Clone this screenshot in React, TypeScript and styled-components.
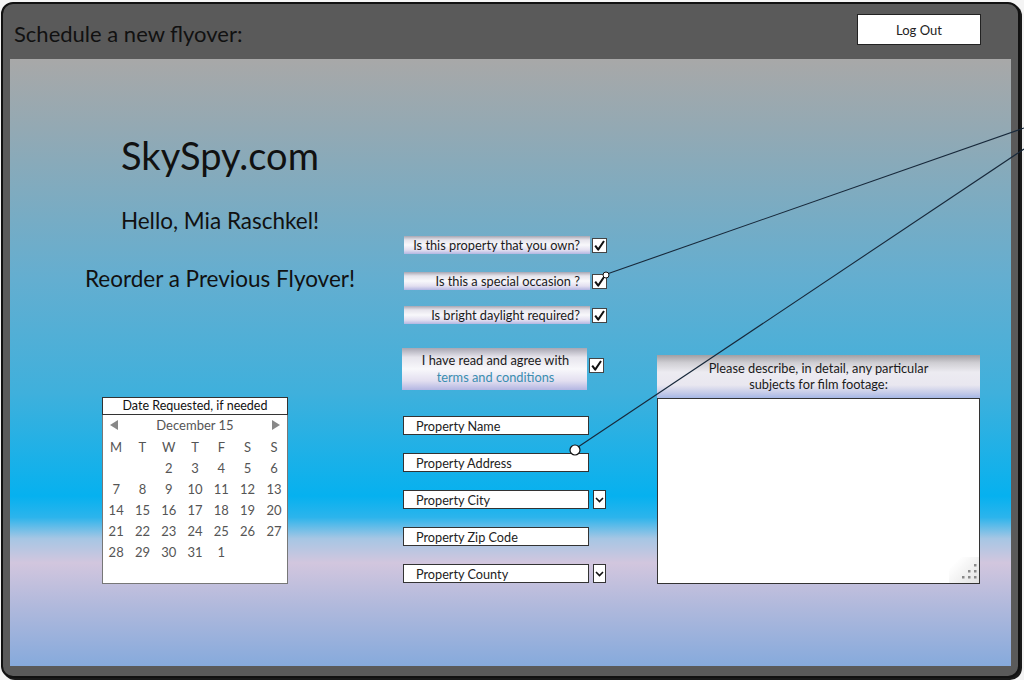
import React from 'react';
import styled, { createGlobalStyle } from 'styled-components';

const GlobalStyle = createGlobalStyle`
  html, body {
    margin: 0;
    padding: 0;
    background: #f4f4f4;
  }
  body {
    font-family: Lato, "Open Sans", sans-serif;
    color: #1a1a1a;
  }
`;

/** page root, holds the frame and the annotation overlay */
const Page = styled.div`
  position: relative;
  width: 1024px;
  height: 680px;
  overflow: hidden;
`;

const Frame = styled.div`
  box-sizing: border-box;
  width: 1019px;
  height: 676px;
  margin: 2px 0 0 1px;
  padding: 0 7px 10px 7px;
  background: #5a5a5a;
  border: 2px solid #111;
  border-radius: 12px;
  box-shadow: 2px 2px 0 #1a1a1a;
  display: flex;
  flex-direction: column;
`;

const TitleBar = styled.div`
  height: 55px;
  display: flex;
  justify-content: space-between;
  align-items: flex-start;
`;

const Title = styled.h1`
  margin: 16px 0 0 4px;
  font-size: 22px;
  line-height: 28px;
  font-weight: 400;
  color: #111;
`;

const LogOut = styled.button`
  box-sizing: border-box;
  width: 124px;
  height: 31px;
  margin: 10px 30px 0 0;
  background: #fff;
  border: 1px solid #222;
  font-family: inherit;
  font-size: 13px;
  color: #222;
`;

const Panel = styled.div`
  flex: 1;
  display: grid;
  grid-template-columns: 392px 255px 323px;
  background: linear-gradient(
    180deg,
    #a8a8a8 0%,
    #92a9b4 12%,
    #64aed0 36%,
    #3fb0dc 55%,
    #06b1ef 72%,
    #2cb4ec 75.5%,
    #a6c6e4 79%,
    #d2c6de 83%,
    #b1b9dc 90%,
    #86aadc 100%
  );
`;

const LeftColumn = styled.div`
  display: flex;
  flex-direction: column;
  align-items: center;
  padding-left: 28px;
`;

const Brand = styled.div`
  margin-top: 73px;
  font-size: 38px;
  line-height: 46px;
  color: #111;
`;

const Greeting = styled.div<{ $gap: number }>`
  margin-top: ${p => p.$gap}px;
  font-size: 22.5px;
  line-height: 28px;
  color: #111;
  white-space: nowrap;
`;

/* ---------- calendar ---------- */

const Calendar = styled.div`
  box-sizing: border-box;
  align-self: flex-start;
  margin: 104px 0 0 64px;
  width: 186px;
  height: 187px;
  background: #fff;
  border: 1px solid #777;
`;

const CalendarHeader = styled.div`
  height: 16px;
  margin: -1px -1px 0;
  border: 1px solid #333;
  font-size: 12.5px;
  line-height: 16px;
  text-align: center;
  color: #111;
`;

const MonthNav = styled.div`
  display: flex;
  align-items: center;
  justify-content: space-between;
  height: 20px;
  padding: 0 7px;
  font-size: 13px;
  color: #555;
`;

const Arrow = styled.span<{ $dir: 'left' | 'right' }>`
  width: 0;
  height: 0;
  border-top: 5px solid transparent;
  border-bottom: 5px solid transparent;
  ${p => (p.$dir === 'left' ? 'border-right: 8px solid #888;' : 'border-left: 8px solid #888;')}
`;

const DayGrid = styled.div`
  display: grid;
  grid-template-columns: repeat(7, 26.3px);
  grid-auto-rows: 21px;
  margin-top: 2px;
`;

const DayCell = styled.span`
  text-align: center;
  font-size: 13px;
  line-height: 21px;
  color: #555;
`;

/* ---------- middle column ---------- */

const MiddleColumn = styled.div`
  display: flex;
  flex-direction: column;
  align-items: flex-start;
`;

const QuestionRow = styled.div<{ $gap: number; $inset: number }>`
  display: flex;
  align-items: center;
  gap: 2px;
  margin: ${p => p.$gap}px 0 0 ${p => p.$inset}px;
`;

const QuestionLabel = styled.div<{ $tall?: boolean }>`
  box-sizing: border-box;
  width: ${p => (p.$tall ? 185 : 186)}px;
  height: ${p => (p.$tall ? 42 : 18)}px;
  padding: ${p => (p.$tall ? '4px 8px 0 10px' : '0 10px 0 4px')};
  background: linear-gradient(
    180deg,
    #a7a6b2 0%,
    #e6e4ec 22%,
    #f8f8fb 50%,
    #e3dff0 78%,
    #b3b6e2 100%
  );
  font-size: 12.8px;
  line-height: ${p => (p.$tall ? '17px' : '18px')};
  color: #1a1a1a;
  text-align: ${p => (p.$tall ? 'center' : 'right')};
  white-space: nowrap;
`;

const TermsLink = styled.span`
  display: block;
  color: #3a8db0;
`;

const CheckBox = styled.span<{ $drop?: number }>`
  box-sizing: border-box;
  width: 15px;
  height: 15px;
  margin-top: ${p => p.$drop ?? 0}px;
  align-self: ${p => (p.$drop ? 'flex-start' : 'center')};
  background: #fff;
  border: 1px solid #444;
  display: flex;
  align-items: center;
  justify-content: center;
`;

const Field = styled.div<{ $gap: number }>`
  display: flex;
  align-items: center;
  gap: 4px;
  margin: ${p => p.$gap}px 0 0 1px;
`;

const FieldBox = styled.div`
  box-sizing: border-box;
  width: 186px;
  height: 19px;
  padding-left: 12px;
  background: #fff;
  border: 1px solid #333;
  font-size: 12.7px;
  line-height: 18px;
  color: #222;
`;

const DropButton = styled.span`
  box-sizing: border-box;
  width: 13px;
  height: 19px;
  background: #fff;
  border: 1px solid #333;
  display: flex;
  align-items: center;
  justify-content: center;
`;

/* ---------- right column ---------- */

const RightColumn = styled.div`
  display: flex;
  flex-direction: column;
  padding-top: 296px;
`;

const NotesHeader = styled.div`
  height: 43px;
  padding-top: 5px;
  box-sizing: border-box;
  background: linear-gradient(
    180deg,
    #a09fa4 0%,
    #cfced3 18%,
    #ecebf1 40%,
    #e9e7f0 70%,
    #c5cbe8 88%,
    #a6b8e6 100%
  );
  font-size: 12.8px;
  line-height: 16px;
  text-align: center;
  color: #1a1a1a;
`;

const NotesBox = styled.div`
  position: relative;
  box-sizing: border-box;
  height: 186px;
  background: #fff;
  border: 1px solid #333;
`;

const Grip = styled.div`
  position: absolute;
  right: 0;
  bottom: 0;
  width: 30px;
  height: 26px;
  background: linear-gradient(135deg, #fff 20%, #e2e2e2 100%);
  display: flex;
  align-items: flex-end;
  justify-content: flex-end;
`;

/* ---------- annotation overlay ---------- */

const Overlay = styled.svg`
  position: absolute;
  left: 0;
  top: 0;
  pointer-events: none;
`;

const Check = () => (
  <svg width="11" height="11" viewBox="0 0 11 11">
    <path d="M1.2 5.6 L4.2 9.6 L10 1" fill="none" stroke="#111" strokeWidth="2" strokeLinejoin="round" />
  </svg>
);

const Chevron = () => (
  <svg width="9" height="6" viewBox="0 0 9 6">
    <path d="M1 1 L4.5 4.5 L8 1" fill="none" stroke="#111" strokeWidth="1.6" />
  </svg>
);

const weekDays = ['M', 'T', 'W', 'T', 'F', 'S', 'S'];
const days: (number | null)[] = [
  null, null, 2, 3, 4, 5, 6,
  7, 8, 9, 10, 11, 12, 13,
  14, 15, 16, 17, 18, 19, 20,
  21, 22, 23, 24, 25, 26, 27,
  28, 29, 30, 31, 1,
];

const questions = [
  { text: 'Is this property that you own?', gap: 177 },
  { text: 'Is this a special occasion ?', gap: 18 },
  { text: 'Is bright daylight required?', gap: 16 },
];

const fields = [
  { text: 'Property Name', gap: 26, drop: false },
  { text: 'Property Address', gap: 18, drop: false },
  { text: 'Property City', gap: 18, drop: true },
  { text: 'Property Zip Code', gap: 18, drop: false },
  { text: 'Property County', gap: 18, drop: true },
];

export default function App() {
  return (
    <Page>
      <GlobalStyle />
      <Frame>
        <TitleBar>
          <Title>Schedule a new flyover:</Title>
          <LogOut>Log Out</LogOut>
        </TitleBar>
        <Panel>
          <LeftColumn>
            <Brand>SkySpy.com</Brand>
            <Greeting $gap={29}>Hello, Mia Raschkel!</Greeting>
            <Greeting $gap={30}>Reorder a Previous Flyover!</Greeting>
            <Calendar>
              <CalendarHeader>Date Requested, if needed</CalendarHeader>
              <MonthNav>
                <Arrow $dir="left" />
                <span>December 15</span>
                <Arrow $dir="right" />
              </MonthNav>
              <DayGrid>
                {weekDays.map((d, i) => (
                  <DayCell key={'w' + i}>{d}</DayCell>
                ))}
                {days.map((d, i) => (
                  <DayCell key={'d' + i}>{d ?? ''}</DayCell>
                ))}
              </DayGrid>
            </Calendar>
          </LeftColumn>

          <MiddleColumn>
            {questions.map(q => (
              <QuestionRow key={q.text} $gap={q.gap} $inset={2}>
                <QuestionLabel>{q.text}</QuestionLabel>
                <CheckBox>
                  <Check />
                </CheckBox>
              </QuestionRow>
            ))}
            <QuestionRow $gap={24} $inset={0}>
              <QuestionLabel $tall>
                I have read and agree with
                <TermsLink>terms and conditions</TermsLink>
              </QuestionLabel>
              <CheckBox $drop={10}>
                <Check />
              </CheckBox>
            </QuestionRow>
            {fields.map(f => (
              <Field key={f.text} $gap={f.gap}>
                <FieldBox>{f.text}</FieldBox>
                {f.drop && (
                  <DropButton>
                    <Chevron />
                  </DropButton>
                )}
              </Field>
            ))}
          </MiddleColumn>

          <RightColumn>
            <NotesHeader>
              Please describe, in detail, any particular
              <br />
              subjects for film footage:
            </NotesHeader>
            <NotesBox>
              <Grip>
                <svg width="24" height="22" viewBox="0 0 24 22">
                  <g fill="#8a8a8a">
                    <rect x="19" y="3" width="2.5" height="2.5" />
                    <rect x="13" y="9" width="2.5" height="2.5" />
                    <rect x="19" y="9" width="2.5" height="2.5" />
                    <rect x="7" y="15" width="2.5" height="2.5" />
                    <rect x="13" y="15" width="2.5" height="2.5" />
                    <rect x="19" y="15" width="2.5" height="2.5" />
                  </g>
                </svg>
              </Grip>
            </NotesBox>
          </RightColumn>
        </Panel>
      </Frame>

      <Overlay width="1024" height="680" viewBox="0 0 1024 680">
        <line x1="607" y1="274" x2="1024" y2="128" stroke="#17283a" strokeWidth="1.1" />
        <line x1="578" y1="447" x2="1024" y2="149" stroke="#17283a" strokeWidth="1.1" />
        <circle cx="606" cy="275" r="3" fill="#fff" stroke="#111" strokeWidth="1" />
        <circle cx="575" cy="450" r="5" fill="#fff" stroke="#111" strokeWidth="1.2" />
      </Overlay>
    </Page>
  );
}
